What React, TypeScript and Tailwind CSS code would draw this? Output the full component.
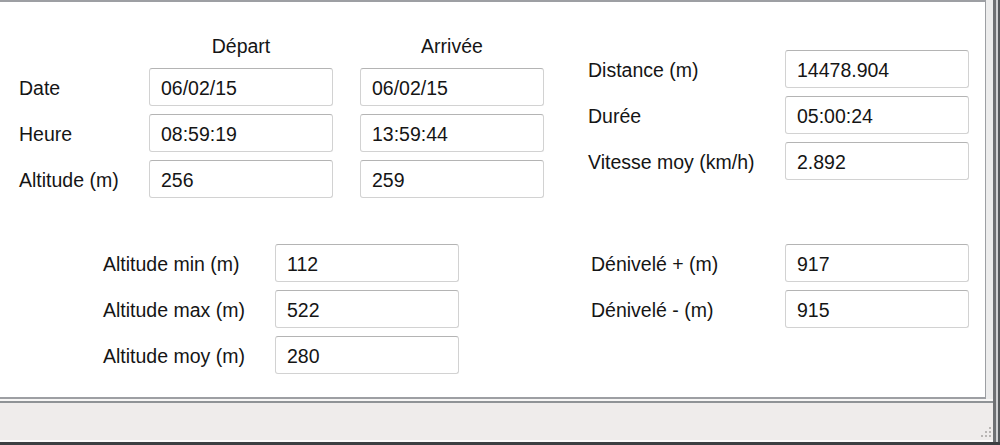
import { Fragment } from "react";

const font = { fontFamily: '"Liberation Sans", Arial, sans-serif' };

function Field({ value }: { value: string }) {
  return (
    <div className="flex h-[38px] items-center rounded-[3px] border border-[#d2d2d2] border-t-[#b4b4b4] bg-white pl-[11px] pt-[3px] text-[#151515]">
      {value}
    </div>
  );
}

function Label({ text }: { text: string }) {
  return <div className="flex h-[38px] items-center pt-[3px] text-[#151515]">{text}</div>;
}

function Rows({ items }: { items: { label: string; value: string }[] }) {
  return (
    <>
      {items.map((r) => (
        <Fragment key={r.label}>
          <Label text={r.label} />
          <Field value={r.value} />
        </Fragment>
      ))}
    </>
  );
}

export default function App() {
  const topRows = [
    { label: "Date", dep: "06/02/15", arr: "06/02/15" },
    { label: "Heure", dep: "08:59:19", arr: "13:59:44" },
    { label: "Altitude (m)", dep: "256", arr: "259" },
  ];
  const stats = [
    { label: "Distance (m)", value: "14478.904" },
    { label: "Durée", value: "05:00:24" },
    { label: "Vitesse moy (km/h)", value: "2.892" },
  ];
  const altitudes = [
    { label: "Altitude min (m)", value: "112" },
    { label: "Altitude max (m)", value: "522" },
    { label: "Altitude moy (m)", value: "280" },
  ];
  const denivele = [
    { label: "Dénivelé + (m)", value: "917" },
    { label: "Dénivelé - (m)", value: "915" },
  ];

  return (
    <div className="flex h-[445px] w-[1000px] flex-col bg-[#efeceb] text-[19.5px] leading-none" style={font}>
      <div className="flex flex-1">
        <div className="flex w-[993px] flex-col">
          <div className="flex bg-[#ececec]">
            <div className="h-[399px] w-[986px] border-t-2 border-r border-b-2 border-[#9d9fa3] bg-white">
              {/* top section */}
              <div className="flex pt-[32px]">
                <div className="ml-[19px]">
                  <div className="mb-[10px] grid h-[24px] grid-cols-[103px_184px_184px] items-center gap-x-[27px] pt-[2px] text-[#151515]">
                    <div />
                    <div className="text-center">Départ</div>
                    <div className="text-center">Arrivée</div>
                  </div>
                  <div className="grid grid-cols-[103px_184px_184px] gap-x-[27px] gap-y-[8px]">
                    {topRows.map((r) => (
                      <Fragment key={r.label}>
                        <Label text={r.label} />
                        <Field value={r.dep} />
                        <Field value={r.arr} />
                      </Fragment>
                    ))}
                  </div>
                </div>
                <div className="ml-[44px] mt-[16px] grid h-fit grid-cols-[197px_184px] gap-y-[8px]">
                  <Rows items={stats} />
                </div>
              </div>
              {/* bottom section */}
              <div className="mt-[46px] flex items-start">
                <div className="ml-[103px] grid grid-cols-[172px_184px] gap-y-[8px]">
                  <Rows items={altitudes} />
                </div>
                <div className="ml-[132px] grid grid-cols-[194px_184px] gap-y-[8px]">
                  <Rows items={denivele} />
                </div>
              </div>
            </div>
          </div>
          {/* status bar */}
          <div className="flex flex-1 border-t-2 border-[#f7f6f5]">
            <div className="flex w-full items-end justify-end border-t-2 border-[#8f9396] border-b-2 border-b-[#fbfafa] pb-[1px] pr-[1px]">
              <svg width="12" height="12" viewBox="0 0 12 12" className="mb-[1px]">
                {[
                  [9, 1],
                  [9, 5],
                  [5, 5],
                  [9, 9],
                  [5, 9],
                  [1, 9],
                ].map(([x, y]) => (
                  <rect key={`${x}-${y}`} x={x} y={y} width="2" height="2" fill="#b9b6b4" />
                ))}
              </svg>
            </div>
          </div>
        </div>
        <div className="flex w-[7px]">
          <div className="w-[3px] bg-[#6e7073]" />
          <div className="w-[2px] bg-[#cfd0d2]" />
          <div className="w-[2px] bg-[#55585b]" />
        </div>
      </div>
      <div className="h-[3px] bg-[#3c3f42]" />
    </div>
  );
}
